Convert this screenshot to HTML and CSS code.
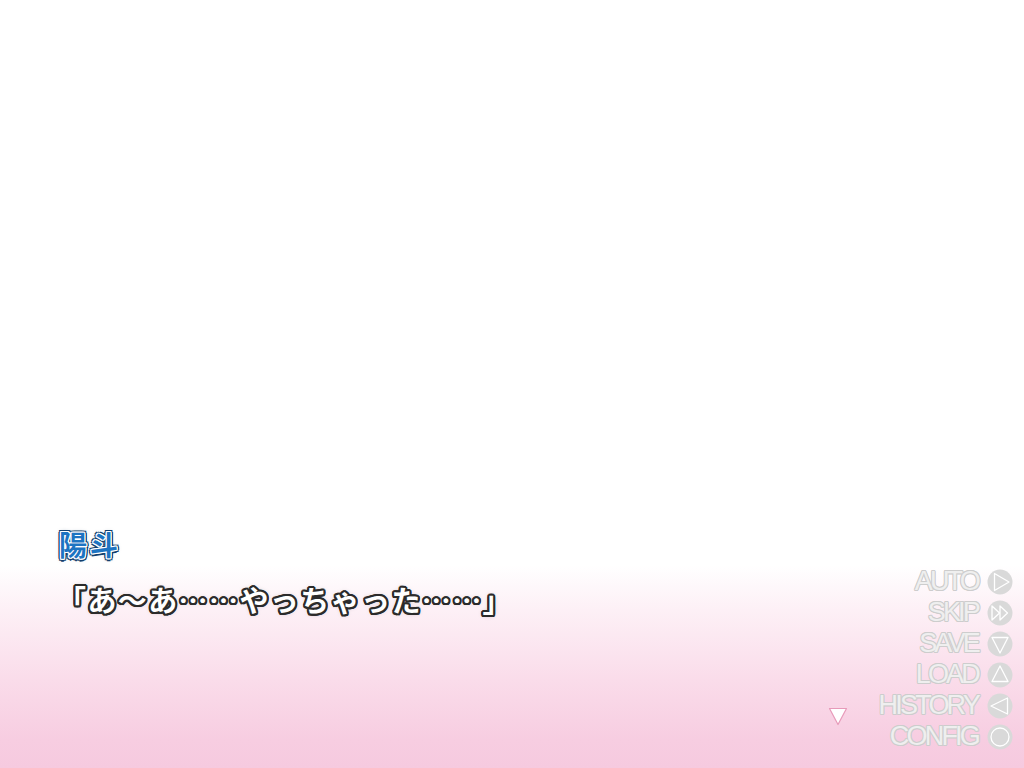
FILE: index.html
```html
<!DOCTYPE html>
<html lang="ja">
<head>
<meta charset="utf-8">
<title>ADV</title>
<link rel="stylesheet" href="styles.css">
</head>
<body>
<div class="stage">
  <div class="window">
    <div class="message">
      <div class="name">陽斗</div>
      <div class="line">「あ〜あ……やっちゃった……」</div>
    </div>
    <div class="cursor">
      <svg width="20" height="19" viewBox="0 0 20 19"><polygon points="1.5,1.5 18.5,1.5 10,17.5" fill="#ffffff" stroke="#e79ab9" stroke-width="1.2" stroke-linejoin="round"/></svg>
    </div>
    <ul class="menu">
      <li class="item"><span class="label">AUTO</span>
        <svg class="icon" viewBox="0 0 26 26"><circle cx="13" cy="13" r="12.5"/><polygon class="mark" points="7.5,4.5 7.5,21.5 22,13"/></svg></li>
      <li class="item"><span class="label">SKIP</span>
        <svg class="icon" viewBox="0 0 26 26"><circle cx="13" cy="13" r="12.5"/><polygon class="mark" points="5,6 5,20 12.5,13"/><polygon class="mark" points="13,6 13,20 20.5,13"/></svg></li>
      <li class="item"><span class="label">SAVE</span>
        <svg class="icon" viewBox="0 0 26 26"><circle cx="13" cy="13" r="12.5"/><polygon class="mark" points="5,6.5 21,6.5 13,22"/></svg></li>
      <li class="item"><span class="label">LOAD</span>
        <svg class="icon" viewBox="0 0 26 26"><circle cx="13" cy="13" r="12.5"/><polygon class="mark" points="13,4 21,19.5 5,19.5"/></svg></li>
      <li class="item"><span class="label">HISTORY</span>
        <svg class="icon" viewBox="0 0 26 26"><circle cx="13" cy="13" r="12.5"/><polygon class="mark" points="4,13 20.5,5 20.5,21"/></svg></li>
      <li class="item"><span class="label">CONFIG</span>
        <svg class="icon" viewBox="0 0 26 26"><circle cx="13" cy="13" r="12.5"/><circle class="mark" cx="13" cy="13" r="9"/></svg></li>
    </ul>
  </div>
</div>
</body>
</html>
```
FILE: styles.css
```css
html, body {
  margin: 0;
  padding: 0;
}
body {
  width: 1024px;
  height: 768px;
  overflow: hidden;
  font-family: "Noto Sans CJK JP", "Noto Sans", sans-serif;
}
.stage {
  width: 1024px;
  height: 768px;
  display: flex;
  flex-direction: column;
  justify-content: flex-end;
  background: linear-gradient(to bottom,
    #ffffff 0px,
    #ffffff 565px,
    #fdf0f6 610px,
    #fadcea 680px,
    #f7cde1 740px,
    #f6cadf 768px);
}
.window {
  height: 240px;
  display: grid;
  grid-template-columns: 1fr auto auto;
  padding: 0 11px 16px 0;
  box-sizing: border-box;
}
.message {
  padding-left: 59px;
}
.name {
  font-size: 28px;
  font-weight: 700;
  line-height: 32px;
  color: #1d74c2;
  letter-spacing: 3px;
  text-shadow:
    1px 0 0 #fff, -1px 0 0 #fff, 0 1px 0 #fff, 0 -1px 0 #fff,
    1px 1px 0 #fff, -1px -1px 0 #fff, 1px -1px 0 #fff, -1px 1px 0 #fff,
    2.5px 0 0 #123f6d, -2.5px 0 0 #123f6d, 0 2.5px 0 #123f6d, 0 -2.5px 0 #123f6d,
    2px 2px 0 #123f6d, -2px -2px 0 #123f6d, 2px -2px 0 #123f6d, -2px 2px 0 #123f6d,
    0 0 4px rgba(18, 63, 109, 0.5);
}
.line {
  margin-top: 20px;
  margin-left: -2px;
  font-size: 29px;
  font-weight: 700;
  line-height: 38px;
  letter-spacing: 1.4px;
  color: #ffffff;
  text-shadow:
    2px 0 0 #2b2b2b, -2px 0 0 #2b2b2b, 0 2px 0 #2b2b2b, 0 -2px 0 #2b2b2b,
    1.5px 1.5px 0 #2b2b2b, -1.5px -1.5px 0 #2b2b2b, 1.5px -1.5px 0 #2b2b2b, -1.5px 1.5px 0 #2b2b2b,
    1px 2px 0 #2b2b2b, -1px 2px 0 #2b2b2b, 2px 1px 0 #2b2b2b, -2px 1px 0 #2b2b2b,
    1px -2px 0 #2b2b2b, -1px -2px 0 #2b2b2b, 2px -1px 0 #2b2b2b, -2px -1px 0 #2b2b2b,
    0 0 5px rgba(0, 0, 0, 0.35);
}
.cursor {
  align-self: end;
  margin: 0 31px 26px 0;
  line-height: 0;
}
.menu {
  align-self: end;
  list-style: none;
  margin: 0;
  padding: 0;
  display: flex;
  flex-direction: column;
  align-items: flex-end;
}
.item {
  height: 31px;
  display: flex;
  align-items: center;
  gap: 7px;
}
.label {
  font-family: "Liberation Sans", Arial, sans-serif;
  font-size: 27px;
  line-height: 31px;
  letter-spacing: -2.8px;
  padding-right: 2px;
  color: #efefef;
  text-shadow:
    1px 0 0 #cdcdcd, -1px 0 0 #cdcdcd, 0 1px 0 #cdcdcd, 0 -1px 0 #cdcdcd,
    0.7px 0.7px 0 #cdcdcd, -0.7px -0.7px 0 #cdcdcd, 0.7px -0.7px 0 #cdcdcd, -0.7px 0.7px 0 #cdcdcd;
}
.icon {
  width: 26px;
  height: 26px;
  display: block;
}
.icon circle {
  fill: #d9d9d9;
}
.icon .mark {
  fill: #d9d9d9;
  stroke: #ffffff;
  stroke-width: 1.3;
  stroke-linejoin: round;
}
```
